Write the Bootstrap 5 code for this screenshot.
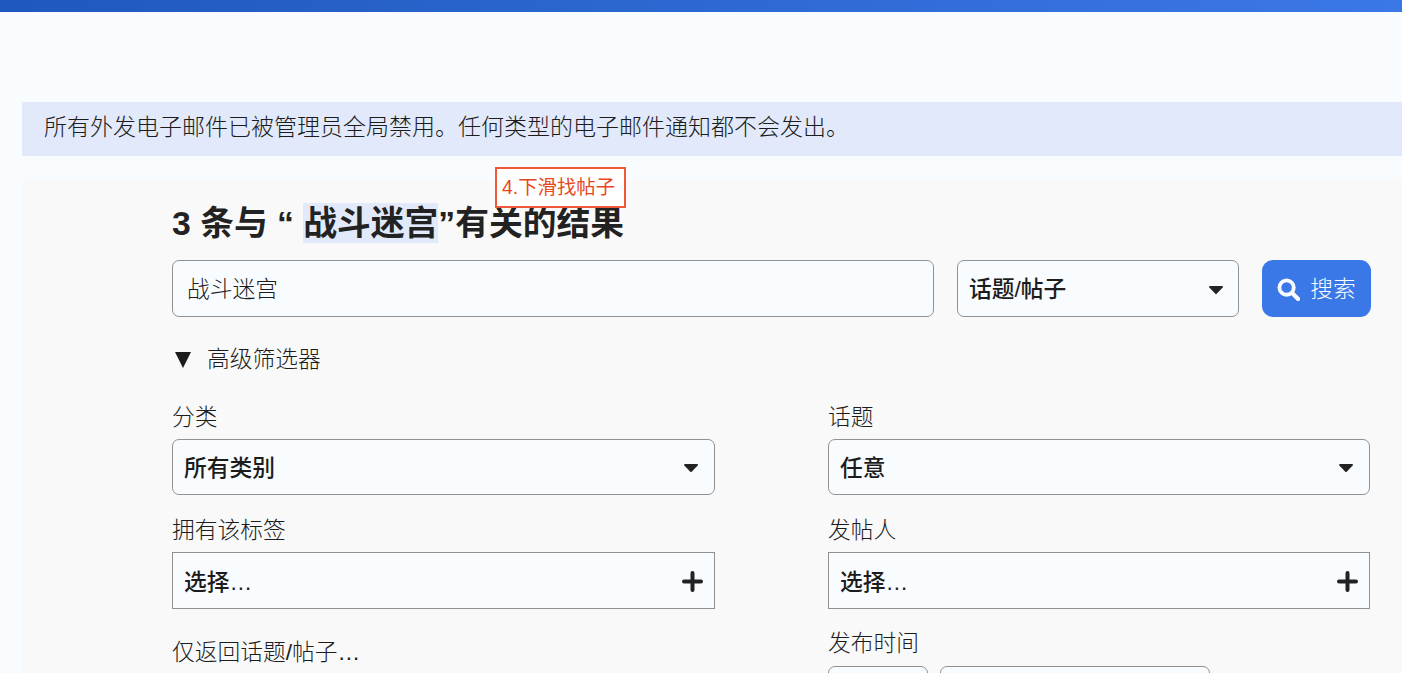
<!DOCTYPE html>
<html lang="zh-CN">
<head>
  <meta charset="UTF-8" />
  <meta name="viewport" content="width=device-width, initial-scale=1.0"/>
  <title>搜索</title>
  <link href="https://cdn.jsdelivr.net/npm/bootstrap@5.3.0/dist/css/bootstrap.min.css" rel="stylesheet">
  <style>
    html, body {
      height: 673px;
      overflow: hidden;
    }

    body {
      background-color: #f9fcff;
      color: #1c1c1c;
      font-family: "Liberation Sans", "Noto Sans CJK SC", sans-serif;
      font-size: 22.75px;
      line-height: 1.4;
    }

    .top-strip {
      height: 12px;
      background: linear-gradient(90deg, #1f59bd, #3b78e7);
    }

    .page-wrap {
      padding: 90px 0 0 22px;
    }

    .mail-notice {
      height: 54px;
      padding: 0 0 3px 22px;
      background-color: #e1e9fa;
      font-size: 23px;
      font-weight: 300;
    }

    .search-panel {
      position: relative;
      margin-top: 23px;
      height: 494px;
      padding: 22px 31px 0 150px;
      background-color: #f9f9f9;
    }

    .step-note {
      position: absolute;
      left: 473px;
      top: -12px;
      width: 131px;
      height: 41px;
      padding-left: 5px;
      background-color: #fff;
      border: 2px solid #f0583a;
      color: #e8481c;
      font-size: 19.4px;
      line-height: 37px;
    }

    .result-title {
      height: 48px;
      margin: 0 0 11px;
      font-size: 33.75px;
      line-height: 44px;
      font-weight: 700;
      color: #222;
    }

    .result-title em {
      display: inline-block;
      height: 40px;
      line-height: 40px;
      font-style: normal;
      background-color: #e1e9fa;
    }

    .field-box {
      height: 57px;
      padding-top: 2px;
      background-color: #f9fcff;
      border: 1px solid #919191;
      border-radius: 7px;
    }

    .term-box {
      width: 762px;
      padding-left: 14px;
      font-weight: 300;
    }

    .type-box {
      width: 282px;
      margin-left: 23px;
      padding: 2px 15px 0 11px;
      font-weight: 500;
    }

    .search-go {
      width: 109px;
      height: 57px;
      margin-left: 23px;
      padding: 2px 0 0;
      background-color: #3b78e7;
      border: 0;
      border-radius: 11px;
      color: #f9fcff;
      font-size: 22.75px;
      font-weight: 300;
      gap: 10px;
    }

    .filter-toggle {
      margin-top: 27px;
      height: 32px;
      font-weight: 300;
    }

    .filter-caret {
      width: 35px;
      padding-left: 3px;
    }

    .filter-grid {
      display: grid;
      grid-template-columns: 543px 542px;
      column-gap: 113px;
      margin-top: 25px;
    }

    .filter-label {
      height: 32px;
      margin-bottom: 6px;
      line-height: 32px;
      font-weight: 300;
    }

    .filter-cell {
      height: 113px;
    }

    .filter-cell .field-box {
      height: 56px;
      padding: 2px 16px 0 11px;
      font-weight: 500;
    }

    .filter-cell .field-box span {
      padding-top: 2px;
    }

    .filter-cell .field-box.square-box {
      height: 57px;
      padding-right: 11px;
      border-radius: 0;
    }

    .date-boxes {
      gap: 12px;
    }

    .date-boxes .field-box {
      height: 57px;
    }

    .date-when {
      width: 100px;
    }

    .date-day {
      width: 270px;
    }

    .only-label {
      padding-top: 9px;
    }

    .posted-label {
      margin-bottom: 7px;
    }
  </style>
</head>
<body>

  <div class="top-strip"></div>

  <div class="page-wrap">
    <div class="mail-notice d-flex align-items-center">所有外发电子邮件已被管理员全局禁用。任何类型的电子邮件通知都不会发出。</div>

    <div class="search-panel">
      <div class="step-note">4.下滑找帖子</div>

      <h1 class="result-title">3 条与 “ <em>战斗迷宫</em>”有关的结果</h1>

      <div class="d-flex">
        <div class="field-box term-box d-flex align-items-center">战斗迷宫</div>
        <div class="field-box type-box d-flex align-items-center justify-content-between">
          <span>话题/帖子</span>
          <svg width="14" height="8" viewBox="0 0 14 8"><path d="M1 0h12c.8 0 1.2.9.7 1.5L7.7 7.7c-.4.4-1 .4-1.4 0L.3 1.5C-.2.9.2 0 1 0z" fill="#222"/></svg>
        </div>
        <button class="search-go d-flex align-items-center justify-content-center" type="button">
          <svg width="23" height="23" viewBox="0 0 24 24"><circle cx="10" cy="10" r="7.5" fill="none" stroke="#f9fcff" stroke-width="4"/><path d="M16 16l6 6" stroke="#f9fcff" stroke-width="4.4" stroke-linecap="round"/></svg>
          <span>搜索</span>
        </button>
      </div>

      <div class="filter-toggle d-flex align-items-center">
        <span class="filter-caret d-flex">
          <svg width="16" height="16" viewBox="0 0 16 16"><path d="M0 0h16L8 16z" fill="#1c1c1c"/></svg>
        </span>
        <span>高级筛选器</span>
      </div>

      <div class="filter-grid">
        <div class="filter-cell">
          <div class="filter-label">分类</div>
          <div class="field-box d-flex align-items-center justify-content-between">
            <span>所有类别</span>
            <svg width="14" height="8" viewBox="0 0 14 8"><path d="M1 0h12c.8 0 1.2.9.7 1.5L7.7 7.7c-.4.4-1 .4-1.4 0L.3 1.5C-.2.9.2 0 1 0z" fill="#222"/></svg>
          </div>
        </div>
        <div class="filter-cell">
          <div class="filter-label">话题</div>
          <div class="field-box d-flex align-items-center justify-content-between">
            <span>任意</span>
            <svg width="14" height="8" viewBox="0 0 14 8"><path d="M1 0h12c.8 0 1.2.9.7 1.5L7.7 7.7c-.4.4-1 .4-1.4 0L.3 1.5C-.2.9.2 0 1 0z" fill="#222"/></svg>
          </div>
        </div>
        <div class="filter-cell">
          <div class="filter-label">拥有该标签</div>
          <div class="field-box square-box d-flex align-items-center justify-content-between">
            <span>选择…</span>
            <svg width="21" height="21" viewBox="0 0 21 21"><path d="M10.5 2v17M2 10.5h17" stroke="#222" stroke-width="4" stroke-linecap="round"/></svg>
          </div>
        </div>
        <div class="filter-cell">
          <div class="filter-label">发帖人</div>
          <div class="field-box square-box d-flex align-items-center justify-content-between">
            <span>选择…</span>
            <svg width="21" height="21" viewBox="0 0 21 21"><path d="M10.5 2v17M2 10.5h17" stroke="#222" stroke-width="4" stroke-linecap="round"/></svg>
          </div>
        </div>
        <div class="filter-cell">
          <div class="filter-label only-label">仅返回话题/帖子…</div>
        </div>
        <div class="filter-cell">
          <div class="filter-label posted-label">发布时间</div>
          <div class="date-boxes d-flex">
            <div class="field-box date-when"></div>
            <div class="field-box date-day"></div>
          </div>
        </div>
      </div>
    </div>
  </div>

  <script src="https://cdn.jsdelivr.net/npm/bootstrap@5.3.0/dist/js/bootstrap.bundle.min.js"></script>
</body>
</html>
